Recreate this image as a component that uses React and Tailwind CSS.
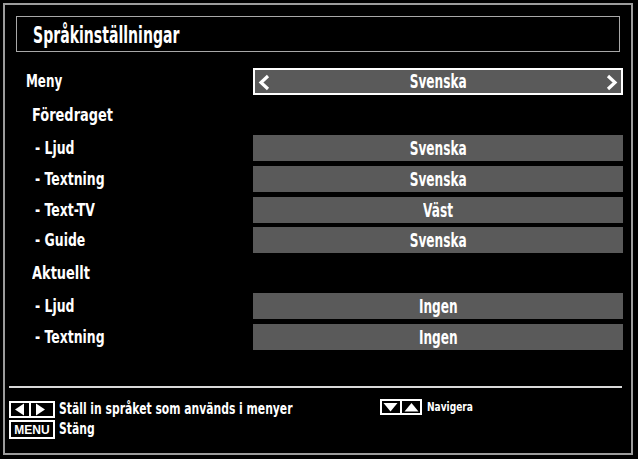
import React from "react";

const F = { fontFamily: '"DejaVu Sans Condensed", "Liberation Sans Narrow", "Liberation Sans", sans-serif' };

function SubRow({ label, value }) {
  return (
    <div className="flex items-center h-[26px]">
      <div className="w-[248px] shrink-0 pl-[30px] text-[18px] font-bold text-white leading-none">
        <span className="inline-block origin-left scale-x-[0.77] whitespace-nowrap">{label}</span>
      </div>
      <div className="w-[370px] h-full bg-[#5a5a5a] flex items-center justify-center text-[19px] font-bold text-white leading-none">
        <span className="inline-block scale-x-[0.71] whitespace-nowrap">{value}</span>
      </div>
    </div>
  );
}

function Section({ label }) {
  return (
    <div className="h-[40px] flex items-center pl-[27px] text-[18px] font-bold text-white leading-none">
      <span className="inline-block origin-left scale-x-[0.8] whitespace-nowrap">{label}</span>
    </div>
  );
}

export default function App() {
  return (
    <div className="w-[638px] h-[459px] bg-black overflow-hidden pt-[3px] pl-[3px]" style={F}>
      <div className="w-[630px] h-[452px] border-2 border-[#9c9c9c] flex flex-col">
        <div className="ml-[11px] mt-[11px] w-[604px] h-[36px] border-[1.5px] border-[#a8a8a8] flex items-center pl-[16px] pt-[3px] text-[23px] font-bold text-white leading-none">
          <span className="inline-block origin-left scale-x-[0.68] whitespace-nowrap">Språkinställningar</span>
        </div>
        <div className="mt-[16px] flex items-center h-[27px]">
          <div className="w-[248px] shrink-0 pl-[21px] text-[17px] font-bold text-white leading-none">
            <span className="inline-block origin-left scale-x-[0.78] whitespace-nowrap">Meny</span>
          </div>
          <div className="w-[370px] h-full bg-[#5a5a5a] border-2 border-white flex items-center justify-between px-[3px] text-[19px] font-bold text-white leading-none">
            <svg width="12" height="17" viewBox="0 0 12 17" className="mt-[2px]">
              <polyline points="10,2 3,8.5 10,15" fill="none" stroke="white" strokeWidth="3.2" />
            </svg>
            <span className="inline-block scale-x-[0.71] whitespace-nowrap">Svenska</span>
            <svg width="12" height="17" viewBox="0 0 12 17" className="mt-[2px]">
              <polyline points="2,2 9,8.5 2,15" fill="none" stroke="white" strokeWidth="3.2" />
            </svg>
          </div>
        </div>
        <Section label="Föredraget" />
        <div className="flex flex-col gap-[5px]">
          <SubRow label="- Ljud" value="Svenska" />
          <SubRow label="- Textning" value="Svenska" />
          <SubRow label="- Text-TV" value="Väst" />
        </div>
        <div className="mt-[4px]">
          <SubRow label="- Guide" value="Svenska" />
        </div>
        <Section label="Aktuellt" />
        <div className="flex flex-col gap-[5px]">
          <SubRow label="- Ljud" value="Ingen" />
          <SubRow label="- Textning" value="Ingen" />
        </div>
        <div className="mt-[36px] ml-[4px] w-[613px] h-[2px] bg-[#d8d8d8]" />
        <div className="mt-[13px] ml-[4px] flex">
          <div className="flex flex-col gap-[2px] w-[371px]">
            <div className="flex items-center gap-[4px] h-[17px]">
              <svg width="46" height="17" viewBox="0 0 46 17" className="shrink-0">
                <rect x="1" y="1" width="44" height="15" fill="black" stroke="white" strokeWidth="2" />
                <polygon points="6,8.5 15,2.5 15,14.5" fill="white" />
                <rect x="20" y="1" width="2" height="15" fill="white" />
                <polygon points="36,8.5 27,2.5 27,14.5" fill="white" />
              </svg>
              <span className="text-[15px] font-bold text-white leading-none inline-block origin-left scale-x-[0.8] whitespace-nowrap">
                Ställ in språket som används i menyer
              </span>
            </div>
            <div className="flex items-center gap-[4px] h-[19px]">
              <div className="w-[46px] h-[19px] border-2 border-white bg-black flex items-center justify-center text-[12px] font-black text-white leading-none" style={{ fontFamily: '"Liberation Sans", sans-serif' }}>
                MENU
              </div>
              <span className="text-[15px] font-bold text-white leading-none inline-block origin-left scale-x-[0.8] whitespace-nowrap">
                Stäng
              </span>
            </div>
          </div>
          <div className="flex items-center gap-[5px] h-[16px] -mt-[2px]">
            <svg width="42" height="16" viewBox="0 0 42 16" className="shrink-0">
              <rect x="1" y="1" width="40" height="14" fill="black" stroke="white" strokeWidth="2" />
              <rect x="20" y="1" width="2" height="14" fill="white" />
              <polygon points="3.5,4 17.5,4 10.5,12.5" fill="white" />
              <polygon points="24.5,12.5 38.5,12.5 31.5,4" fill="white" />
            </svg>
            <span className="text-[12px] font-bold text-white leading-none inline-block origin-left scale-x-[0.84] whitespace-nowrap">
              Navigera
            </span>
          </div>
        </div>
      </div>
    </div>
  );
}
